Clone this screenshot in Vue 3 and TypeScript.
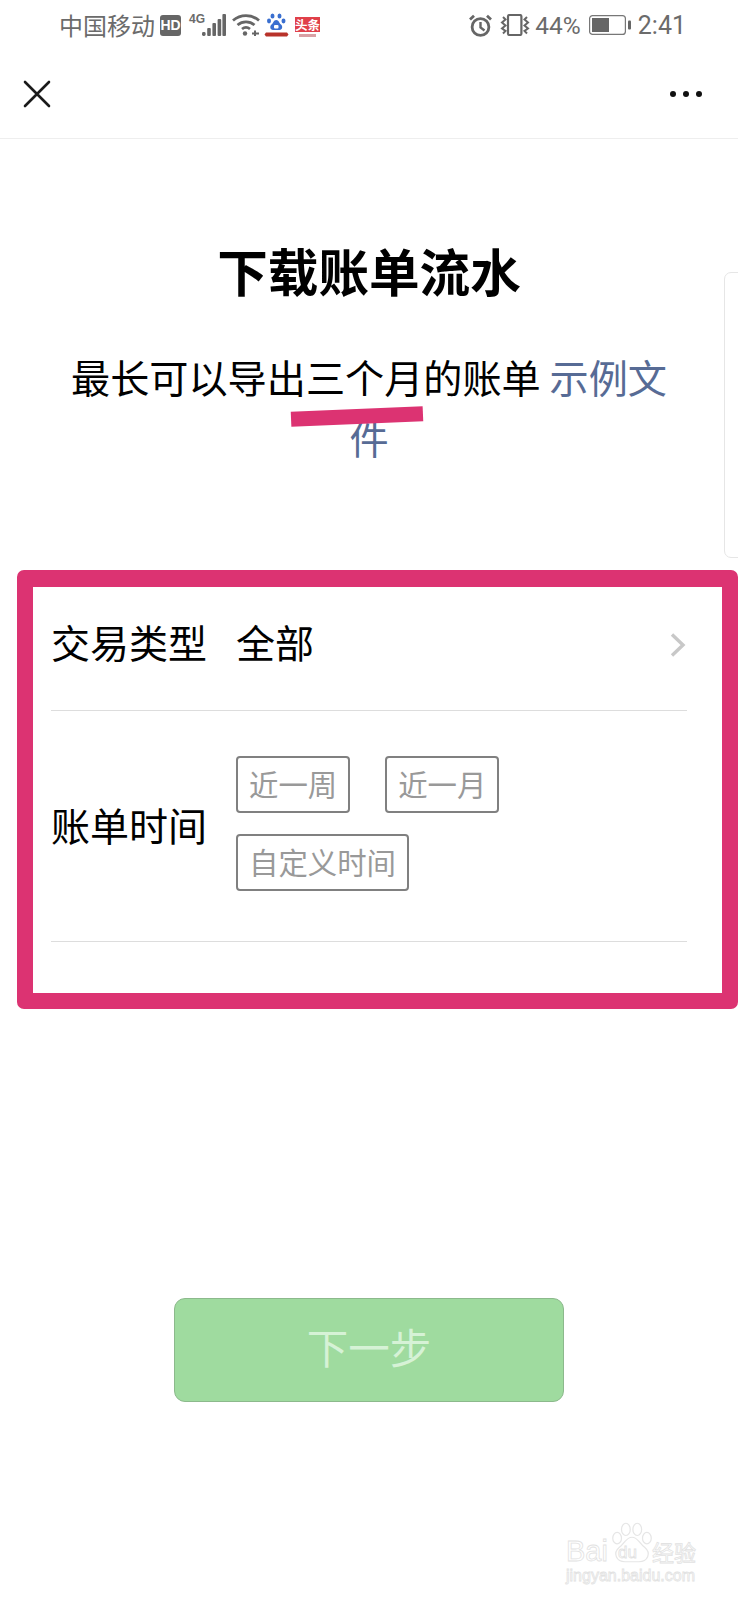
<script setup lang="ts">
const periods = ['近一周', '近一月', '自定义时间'];
</script>

<template>
  <div class="page">
    <div class="status-bar">
      <div class="status-left">
        <span class="carrier">中国移动</span>
        <span class="hd">HD</span>
        <span class="net">4G</span>
        <svg class="bars" width="24" height="22" viewBox="0 0 24 22">
          <rect x="0" y="18" width="3.6" height="4" rx="1.4" />
          <rect x="5.2" y="14" width="3.6" height="8" rx="1" />
          <rect x="10.4" y="9" width="3.6" height="13" rx="1" />
          <rect x="15.6" y="5" width="3.6" height="17" rx="1" />
          <rect x="20.4" y="0" width="3.6" height="22" rx="1" />
        </svg>
        <svg class="wifi" width="28" height="22" viewBox="0 0 28 22" fill="none" stroke="#666" stroke-width="2.8">
          <path d="M1 6.5C8.5 0 19.5 0 27 6.5" />
          <path d="M5.5 11C10.5 6.8 17.5 6.8 22.5 11" />
          <path d="M10 15C12.5 13 15.5 13 18 15" />
          <circle cx="13" cy="19.5" r="2.2" fill="#666" stroke="none" />
          <path d="M20 19.5h7M23 16.5v6" stroke-width="2" />
        </svg>
        <svg class="paw-app" width="25" height="24" viewBox="0 0 25 24">
          <ellipse cx="8.5" cy="3" rx="2" ry="2.6" fill="#3a6fd0" />
          <ellipse cx="15.5" cy="3" rx="2" ry="2.6" fill="#3a6fd0" />
          <ellipse cx="5" cy="8" rx="2" ry="2.4" fill="#3a6fd0" />
          <ellipse cx="19.5" cy="8" rx="2" ry="2.4" fill="#3a6fd0" />
          <path d="M12.2 7C9.5 7 9.5 10 7.5 11.5 5.5 13 6 17 9 17H15.5C18.5 17 19 13 17 11.5 15 10 15 7 12.2 7Z" fill="#3a6fd0" />
          <rect x="10" y="12" width="4.5" height="3.6" rx="1" fill="#fff" />
          <path d="M2 19.5H23L24.5 21.5 23 23.5H2L.5 21.5Z" fill="#b8322a" />
        </svg>
        <div class="news-app">
          <span class="news-name">头条</span>
          <span class="news-foot"></span>
        </div>
      </div>
      <div class="status-right">
        <svg class="alarm" width="23" height="23" viewBox="0 0 23 23" fill="none" stroke="#666" stroke-width="2.8">
          <circle cx="11.5" cy="13" r="8.4" />
          <path d="M11.5 8v5.5l4 3" stroke-width="2.4" />
          <path d="M1 5.5 5 1.8M22 5.5 18 1.8" />
        </svg>
        <svg class="vibrate" width="30" height="22" viewBox="0 0 30 22" fill="none" stroke="#666">
          <rect x="8" y="1" width="13.4" height="20" rx="1.6" stroke-width="2.2" />
          <path d="M3 3 5.5 5.5 2 8.5 5.5 11.5 2 14.5 5.5 17 3 19.5" stroke-width="2" />
          <path d="M27 3 24.5 5.5 28 8.5 24.5 11.5 28 14.5 24.5 17 27 19.5" stroke-width="2" />
        </svg>
        <span class="percent">44%</span>
        <svg class="battery" width="42" height="20" viewBox="0 0 42 20">
          <rect x=".6" y=".6" width="35.8" height="18.8" rx="3" fill="none" stroke="#777" stroke-width="1.2" />
          <rect x="3" y="3" width="17" height="14" fill="#666" />
          <rect x="39" y="5.5" width="3" height="9" rx="1" fill="#666" />
        </svg>
        <span class="clock">2:41</span>
      </div>
    </div>

    <div class="nav-bar">
      <svg width="28" height="28" viewBox="0 0 28 28" fill="none" stroke="#1a1a1a" stroke-width="2.6" stroke-linecap="round">
        <path d="M2 2 26 26M26 2 2 26" />
      </svg>
      <div class="more">
        <i></i><i></i><i></i>
      </div>
    </div>

    <h1 class="title">下载账单流水</h1>

    <p class="desc">
      最长可以导出三个月的账单 <a class="link">示例文件</a>
      <span class="scribble"></span>
    </p>

    <div class="frame">
      <div class="row row-type">
        <span class="label">交易类型</span>
        <span class="value">全部</span>
        <svg class="chevron" width="16" height="24" viewBox="0 0 16 24" fill="none" stroke="#c8c8c8" stroke-width="3.4">
          <path d="M2 1.5 13 12 2 22.5" />
        </svg>
      </div>
      <div class="row row-time">
        <span class="label">账单时间</span>
        <div class="options">
          <span v-for="p in periods" :key="p" class="option">{{ p }}</span>
        </div>
      </div>
      <div class="frame-foot"></div>
    </div>

    <div class="actions">
      <button class="next" type="button">下一步</button>
    </div>

    <div class="side-tab"></div>

    <div class="watermark">
      <svg class="wm-paw" width="42" height="45" viewBox="0 0 48 46" fill="none" stroke="#e6e6e6" stroke-width="1.4">
        <ellipse cx="17" cy="8" rx="5" ry="7" />
        <ellipse cx="30" cy="8" rx="5" ry="7" />
        <ellipse cx="7" cy="18" rx="5" ry="6.5" />
        <ellipse cx="41" cy="18" rx="5" ry="6.5" />
        <path d="M24 17C17 17 17 23 9 29 2 35 6 45 16 45H32C42 45 46 35 39 29 31 23 31 17 24 17Z" />
      </svg>
      <span class="wm-bai">Bai</span>
      <span class="wm-du">du</span>
      <span class="wm-cn">经验</span>
      <span class="wm-url">jingyan.baidu.com</span>
    </div>
  </div>
</template>

<style scoped>
.page {
  position: relative;
  width: 738px;
  height: 1600px;
  overflow: hidden;
  background: #fff;
  font-family: "Noto Sans CJK SC", "Liberation Sans", sans-serif;
  color: #000;
}

.status-bar {
  height: 50px;
  padding: 0 52px 0 59px;
  box-sizing: border-box;
  display: flex;
  justify-content: space-between;
  align-items: center;
  color: #6b6b6b;
  font-size: 24px;
}

.status-left,
.status-right {
  display: flex;
  align-items: center;
}

.carrier {
  line-height: 50px;
}

.hd {
  width: 21px;
  height: 21px;
  margin-left: 5px;
  border-radius: 3px;
  background: #666;
  color: #fff;
  font: bold 14px/21px "Liberation Sans", sans-serif;
  text-align: center;
}

.net {
  width: 14px;
  margin: -12px 0 0 8px;
  font: bold 12px/14px "Liberation Sans", sans-serif;
}

.bars {
  margin-left: -1px;
  fill: #666;
}

.wifi {
  margin-left: 6px;
}

.paw-app {
  margin-left: 4px;
}

.news-app {
  width: 25px;
  margin: 4px 0 0 6px;
}

.news-name {
  display: block;
  height: 15px;
  background: #e0404a;
  color: #fff;
  font-size: 12.5px;
  font-weight: 700;
  line-height: 15px;
  text-align: center;
}

.news-foot {
  display: block;
  width: 17px;
  height: 3px;
  margin: 2px auto 0;
  background: #d9a0a4;
}

.vibrate {
  margin-left: 8px;
}

.percent {
  margin-left: 5px;
  font-family: "Roboto", "Liberation Sans", sans-serif;
  font-size: 24.5px;
}

.battery {
  margin-left: 8px;
}

.clock {
  margin-left: 7px;
  font-family: "Roboto", "Liberation Sans", sans-serif;
  font-size: 25px;
}

.nav-bar {
  height: 89px;
  padding: 0 36px 0 23px;
  box-sizing: border-box;
  border-bottom: 1px solid #eee;
  display: flex;
  justify-content: space-between;
  align-items: center;
}

.more {
  display: flex;
  gap: 7px;
}

.more i {
  width: 6px;
  height: 6px;
  border-radius: 50%;
  background: #111;
}

.title {
  margin: 0;
  padding-top: 95px;
  font-size: 50.6px;
  line-height: 72px;
  font-weight: 700;
  text-align: center;
}

.desc {
  position: relative;
  margin: 40px 0 0;
  padding: 0 67px;
  font-size: 39.15px;
  line-height: 61px;
  text-align: center;
}

.link {
  color: #576b95;
}

.scribble {
  position: absolute;
  left: 291px;
  top: 63px;
  width: 132px;
  height: 15px;
  background: #dc3372;
  transform: rotate(-2.4deg);
}

.frame {
  width: 721px;
  margin: 102px 0 0 17px;
  padding: 0 35px 0 18px;
  box-sizing: border-box;
  border: 16px solid #dc3372;
  border-top-width: 17px;
  border-radius: 7px;
  font-size: 39px;
  line-height: 56px;
}

.row {
  display: flex;
  align-items: center;
  border-bottom: 1px solid #ddd;
}

.row-type {
  height: 124px;
  padding-bottom: 16px;
  box-sizing: border-box;
}

.row-time {
  height: 230px;
}

.row-time .label {
  margin-bottom: 4px;
}

.label {
  width: 185px;
  flex: none;
}

.chevron {
  margin: 8px 1px 0 auto;
}

.options {
  display: flex;
  flex-wrap: wrap;
  gap: 21px 35px;
  width: 400px;
  margin-top: -6px;
}

.option {
  height: 57px;
  padding: 0 11px;
  box-sizing: border-box;
  border: 2px solid #808080;
  border-radius: 4px;
  color: #999;
  font-size: 29.4px;
  line-height: 50px;
}

.frame-foot {
  height: 51px;
}

.actions {
  display: flex;
  justify-content: center;
  padding-top: 289px;
}

.next {
  width: 390px;
  height: 104px;
  padding: 0 0 8px;
  border: 1px solid #8cb98c;
  border-radius: 11px;
  background: #9fdb9f;
  color: #d6f2d6;
  font-family: inherit;
  font-size: 41.5px;
}

.side-tab {
  position: absolute;
  top: 272px;
  right: -8px;
  width: 20px;
  height: 284px;
  border: 1px solid #e6e6e6;
  border-radius: 7px;
}

.watermark {
  position: absolute;
  left: 566px;
  top: 1520px;
  width: 134px;
  height: 66px;
  color: #fff;
  -webkit-text-stroke: 0.8px #e2e2e2;
  font-family: "Liberation Sans", sans-serif;
}

.wm-paw {
  position: absolute;
  left: 45px;
  top: 0;
}

.wm-bai,
.wm-du,
.wm-cn,
.wm-url {
  position: absolute;
  white-space: nowrap;
}

.wm-bai {
  left: 0;
  top: 15px;
  font-size: 29px;
  line-height: 32px;
}

.wm-du {
  left: 52px;
  top: 24px;
  font-size: 17px;
  line-height: 18px;
}

.wm-cn {
  left: 86px;
  top: 18px;
  font-family: "Noto Sans CJK SC", sans-serif;
  font-size: 22px;
  line-height: 26px;
}

.wm-url {
  left: 0;
  top: 47px;
  font-size: 16px;
  line-height: 18px;
}
</style>
